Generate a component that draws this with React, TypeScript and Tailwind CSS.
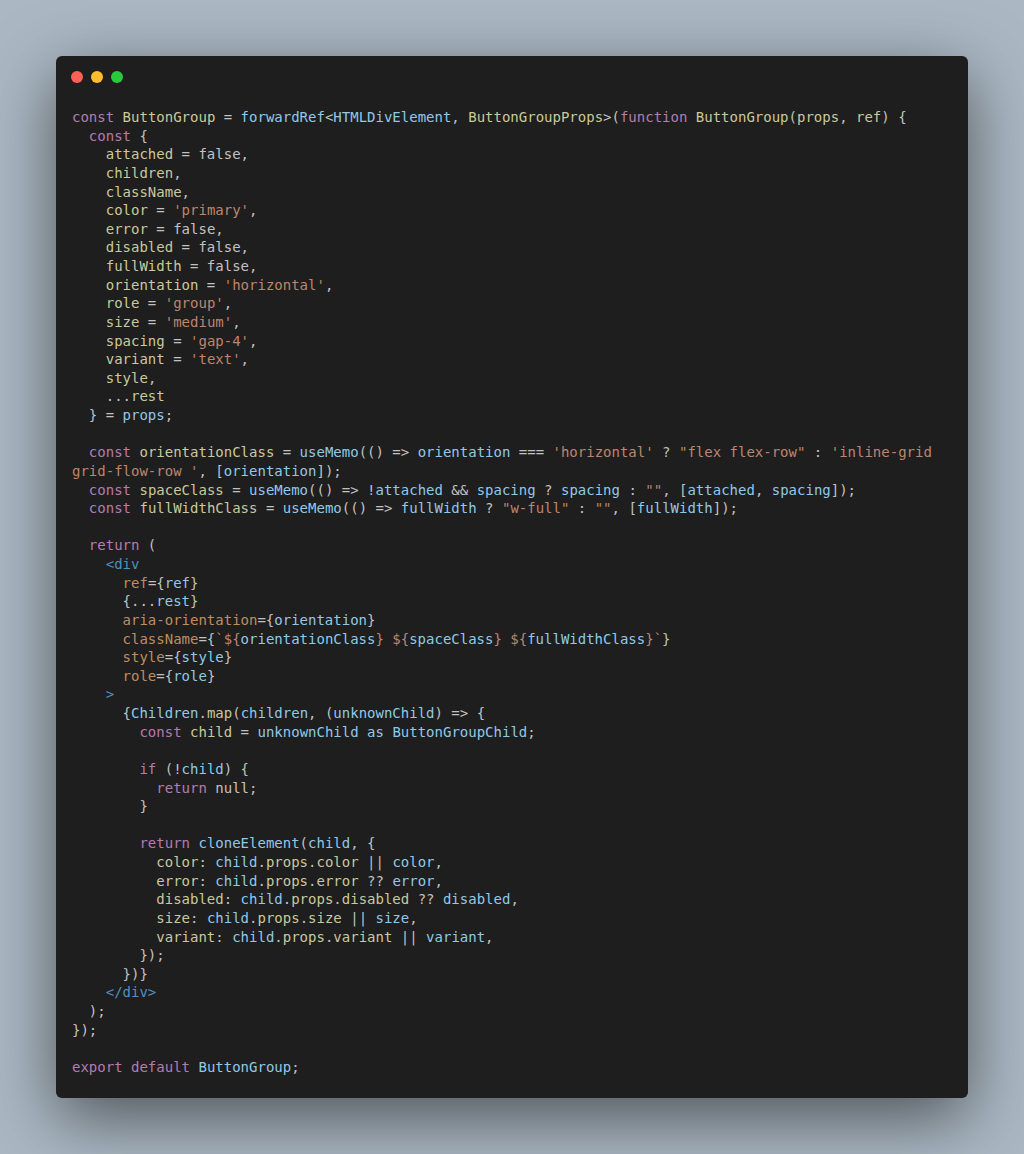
type Tok = [keyof typeof colors, string];

const colors = {
  k: 'text-[#c586c0]',
  f: 'text-[#dcdcaa]',
  v: 'text-[#9cdcfe]',
  s: 'text-[#ce9178]',
  p: 'text-[#d4d4d4]',
  t: 'text-[#569cd6]',
  a: 'text-[#d19a66]',
};

const P = (text: string): Tok => ['p', text];
const K = (text: string): Tok => ['k', text];
const F = (text: string): Tok => ['f', text];
const V = (text: string): Tok => ['v', text];
const S = (text: string): Tok => ['s', text];
const T = (text: string): Tok => ['t', text];
const A = (text: string): Tok => ['a', text];

const prop = (name: string, rest: Tok[]): Tok[] => [P('    '), F(name), ...rest];

// color: child.props.color || color,
const childProp = (name: string, op: string): Tok[] => [
  P('          '), F(name), P(': '), V('child'), P('.'), F('props'), P('.'), F(name), P(` ${op} `), V(name), P(','),
];

const code: Tok[][] = [
  [K('const'), P(' '), F('ButtonGroup'), P(' = '), V('forwardRef'), P('<'), V('HTMLDivElement'), P(', '), F('ButtonGroupProps'), P('>('), K('function'), P(' '), F('ButtonGroup'), P('('), F('props'), P(', '), F('ref'), P(') {')],
  [P('  '), K('const'), P(' {')],
  prop('attached', [P(' = false,')]),
  prop('children', [P(',')]),
  prop('className', [P(',')]),
  prop('color', [P(' = '), S("'primary'"), P(',')]),
  prop('error', [P(' = false,')]),
  prop('disabled', [P(' = false,')]),
  prop('fullWidth', [P(' = false,')]),
  prop('orientation', [P(' = '), S("'horizontal'"), P(',')]),
  prop('role', [P(' = '), S("'group'"), P(',')]),
  prop('size', [P(' = '), S("'medium'"), P(',')]),
  prop('spacing', [P(' = '), S("'gap-4'"), P(',')]),
  prop('variant', [P(' = '), S("'text'"), P(',')]),
  prop('style', [P(',')]),
  [P('    ...'), F('rest')],
  [P('  } = '), V('props'), P(';')],
  [],
  [P('  '), K('const'), P(' '), F('orientationClass'), P(' = '), V('useMemo'), P('(() => '), V('orientation'), P(' === '), S("'horizontal'"), P(' ? '), S('"flex flex-row"'), P(' : '), S("'inline-grid")],
  [S("grid-flow-row '"), P(', ['), V('orientation'), P(']);')],
  [P('  '), K('const'), P(' '), F('spaceClass'), P(' = '), V('useMemo'), P('(() => !'), V('attached'), P(' && '), V('spacing'), P(' ? '), V('spacing'), P(' : '), S('""'), P(', ['), V('attached'), P(', '), V('spacing'), P(']);')],
  [P('  '), K('const'), P(' '), F('fullWidthClass'), P(' = '), V('useMemo'), P('(() => '), V('fullWidth'), P(' ? '), S('"w-full"'), P(' : '), S('""'), P(', ['), V('fullWidth'), P(']);')],
  [],
  [P('  '), K('return'), P(' (')],
  [P('    '), T('<div')],
  [P('      '), A('ref'), P('={'), V('ref'), P('}')],
  [P('      {...'), V('rest'), P('}')],
  [P('      '), A('aria-orientation'), P('={'), V('orientation'), P('}')],
  [P('      '), A('className'), P('={'), S('`${'), V('orientationClass'), S('} ${'), V('spaceClass'), S('} ${'), V('fullWidthClass'), S('}`'), P('}')],
  [P('      '), A('style'), P('={'), V('style'), P('}')],
  [P('      '), A('role'), P('={'), V('role'), P('}')],
  [P('    '), T('>')],
  [P('      {'), V('Children'), P('.'), F('map'), P('('), V('children'), P(', ('), V('unknownChild'), P(') => {')],
  [P('        '), K('const'), P(' '), F('child'), P(' = '), V('unknownChild'), P(' '), V('as'), P(' '), V('ButtonGroupChild'), P(';')],
  [],
  [P('        '), K('if'), P(' (!'), V('child'), P(') {')],
  [P('          '), K('return'), P(' null;')],
  [P('        }')],
  [],
  [P('        '), K('return'), P(' '), V('cloneElement'), P('('), V('child'), P(', {')],
  childProp('color', '||'),
  childProp('error', '??'),
  childProp('disabled', '??'),
  childProp('size', '||'),
  childProp('variant', '||'),
  [P('        });')],
  [P('      })}')],
  [P('    '), T('</div>')],
  [P('  );')],
  [P('});')],
  [],
  [K('export'), P(' '), K('default'), P(' '), V('ButtonGroup'), P(';')],
];

export default function App() {
  return (
    <div className="min-h-[1154px] bg-[#abb8c3] p-[56px]">
      <div className="h-[1042px] rounded-md bg-[#1e1e1e] shadow-[0_20px_68px_rgba(0,0,0,0.55)]">
        {/* window buttons */}
        <div className="flex gap-2 pt-[15px] pl-[15px]">
          <span className="h-3 w-3 rounded-full bg-[#ff5f56]" />
          <span className="h-3 w-3 rounded-full bg-[#ffbd2e]" />
          <span className="h-3 w-3 rounded-full bg-[#27c93f]" />
        </div>

        <pre className="mt-[25px] pl-4 font-['DejaVu_Sans_Mono',monospace] text-[14px] leading-[18.63px] opacity-90">
          {code.map((line, i) => (
            <div key={i} className="h-[18.63px]">
              {line.map(([c, text], j) => (
                <span key={j} className={colors[c]}>
                  {text}
                </span>
              ))}
            </div>
          ))}
        </pre>
      </div>
    </div>
  );
}
